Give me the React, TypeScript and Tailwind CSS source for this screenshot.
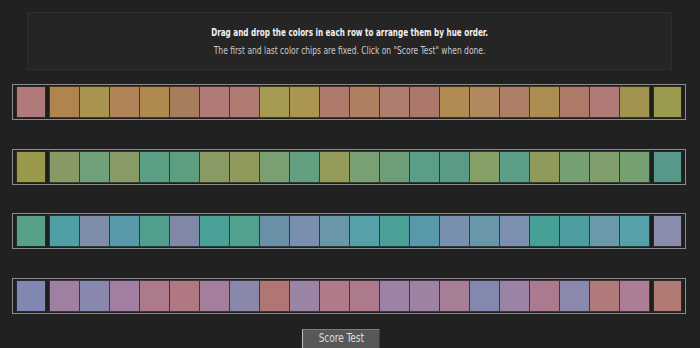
const rows: string[][] = [
  [
    "#b07a7a",
    "#b0844f", "#a8944f", "#b08358", "#ae8a4e", "#a87d5e", "#b07a78", "#ae7a72", "#a59a52", "#aa9650", "#ae7a6c",
    "#ae8060", "#ad7e70", "#ad786c", "#b08c52", "#b08a5e", "#ad7e66", "#ad8e52", "#ae7a68", "#b07a78", "#a0944f",
    "#9c9a4e",
  ],
  [
    "#9a984a",
    "#879a66", "#70a07a", "#889a66", "#5a9e84", "#5e9e80", "#8a9a64", "#909a5c", "#7aa072", "#62a080", "#949a5a",
    "#78a074", "#6e9e78", "#5a9e88", "#5c9a88", "#86a068", "#5a9e88", "#909a5a", "#74a074", "#809e6e", "#74a072",
    "#58988a",
  ],
  [
    "#58a08a",
    "#4fa0a4", "#7e8eaa", "#5898a8", "#4f9e8e", "#8088a8", "#48a096", "#52a08e", "#6a90a8", "#7a8eae", "#6a96aa",
    "#56a0aa", "#4aa096", "#5898a8", "#7890ae", "#6a96aa", "#7a90ae", "#46a096", "#4c9e9e", "#6a9aaa", "#56a0aa",
    "#8a8cae",
  ],
  [
    "#8088b2",
    "#a080a0", "#8888ae", "#a27ea0", "#ac7a8a", "#b07880", "#a47e9a", "#8a88aa", "#b07676", "#9a84a4", "#b07a88",
    "#ac7a8a", "#9c82a4", "#9e82a2", "#a67e96", "#8288ae", "#9a84a6", "#ac7a8e", "#8a88ac", "#b07a7a", "#ac7e96",
    "#b27a74",
  ],
];

// condensed face, squeezed a bit more to get the narrow look of the original
const font = { fontFamily: '"DejaVu Sans Condensed", "Liberation Sans", sans-serif' };

function ChipRow({ colors }: { colors: string[] }) {
  const first = colors[0];
  const last = colors[colors.length - 1];
  const middle = colors.slice(1, -1);
  return (
    <div className="flex h-[36px] w-[674px] items-center gap-[3px] border border-[#8c8c8c] bg-[#1e1e1e] px-[3px]">
      <div className="h-[32px] w-[30px] border border-black/70" style={{ backgroundColor: first }} />
      <div className="flex">
        {middle.map((c, i) => (
          <div
            key={i}
            className={`h-[32px] w-[31px] border border-black/60 ${i > 0 ? "-ml-px" : ""}`}
            style={{ backgroundColor: c }}
          />
        ))}
      </div>
      <div className="h-[32px] w-[30px] border border-black/70" style={{ backgroundColor: last }} />
    </div>
  );
}

export default function App() {
  return (
    <div className="h-[348px] w-[700px] overflow-hidden bg-[#212121] pt-[12px]" style={font}>
      <div className="ml-[27px] flex h-[58px] w-[645px] flex-col items-center justify-center gap-[5px] border border-[#2e2e2e] bg-[#252525]">
        <p className="scale-x-[0.73] whitespace-nowrap text-[11px] font-bold leading-[13px] text-[#f2f2f2]">
          Drag and drop the colors in each row to arrange them by hue order.
        </p>
        <p className="scale-x-[0.765] whitespace-nowrap text-[11px] leading-[13px] text-[#cccccc]">
          The first and last color chips are fixed. Click on "Score Test" when done.
        </p>
      </div>

      <div className="ml-[12px] mt-[14px] flex flex-col gap-[28.5px]">
        {rows.map((r, i) => (
          <ChipRow key={i} colors={r} />
        ))}
      </div>

      <button className="ml-[302px] mt-[15px] h-[22px] w-[78px] border border-b-[#3a3a3a] border-l-[#bdbdbd] border-r-[#3a3a3a] border-t-[#7a7a7a] bg-[#585858] pb-[3px] text-[12px] leading-[14px] text-[#dcdcdc]">
        <span className="inline-block scale-x-[0.83]">Score Test</span>
      </button>
    </div>
  );
}
